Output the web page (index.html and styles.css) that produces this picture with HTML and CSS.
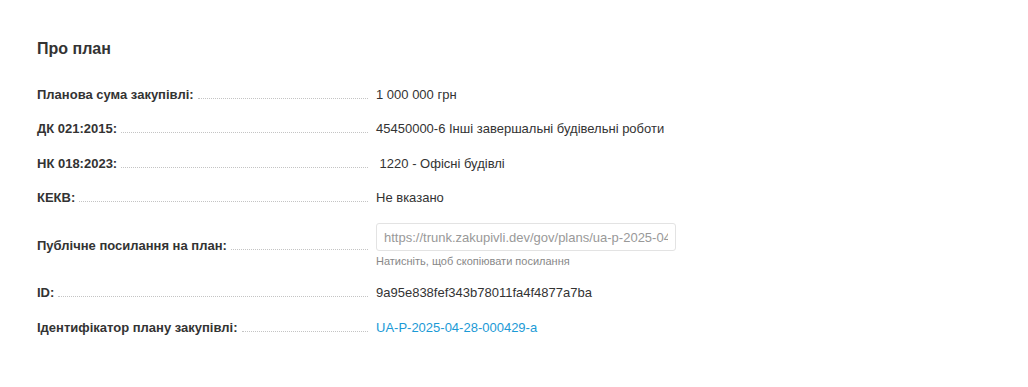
FILE: index.html
```html
<!DOCTYPE html>
<html>
<head>
<meta charset="utf-8">
<title>Про план</title>
<link rel="stylesheet" href="styles.css">
</head>
<body>
<div class="plan">
	<h2>Про план</h2>
	<div class="row">
		<div class="label"><span>Планова сума закупівлі:</span><i class="dots"></i></div>
		<div class="val">1 000 000 грн</div>
	</div>
	<div class="row">
		<div class="label"><span>ДК 021:2015:</span><i class="dots"></i></div>
		<div class="val">45450000-6 Інші завершальні будівельні роботи</div>
	</div>
	<div class="row">
		<div class="label"><span>НК 018:2023:</span><i class="dots"></i></div>
		<div class="val">&nbsp;1220 - Офісні будівлі</div>
	</div>
	<div class="row">
		<div class="label"><span>КЕКВ:</span><i class="dots"></i></div>
		<div class="val">Не вказано</div>
	</div>
	<div class="row">
		<div class="label"><span>Публічне посилання на план:</span><i class="dots"></i></div>
		<div class="val">
			<input class="link" type="text" readonly value="https://trunk.zakupivli.dev/gov/plans/ua-p-2025-04-28-000429-a">
			<div class="hint">Натисніть, щоб скопіювати посилання</div>
		</div>
	</div>
	<div class="row">
		<div class="label"><span>ID:</span><i class="dots"></i></div>
		<div class="val">9a95e838fef343b78011fa4f4877a7ba</div>
	</div>
	<div class="row">
		<div class="label"><span>Ідентифікатор плану закупівлі:</span><i class="dots"></i></div>
		<div class="val"><a href="#">UA-P-2025-04-28-000429-a</a></div>
	</div>
</div>
</body>
</html>
```

FILE: styles.css
```css
body {
	margin: 0;
	background: #fff;
	color: #333;
	font-family: "Liberation Sans", Arial, sans-serif;
	font-size: 13px;
}
.plan {
	padding: 38px 37px;
}
h2 {
	font-size: 16px;
	line-height: 20px;
	margin: 1px 0 19px 0;
}
/* rows */
.row {
	display: flex;
	align-items: center;
	padding: 8px 0;
	line-height: 18.33px;
}
.label {
	width: 331px;
	flex: none;
	display: flex;
	align-items: baseline;
	font-weight: bold;
	margin-right: 8px;
}
.dots {
	flex: 1;
	margin-left: 4px;
	border-bottom: 1px dotted #c4c4c4;
}
.val a {
	color: #1b9ad6;
	text-decoration: none;
}
/* link field */
.link {
	display: block;
	box-sizing: border-box;
	width: 300px;
	height: 28px;
	margin: 0;
	padding: 0 7px;
	border: 1px solid #e3e3e3;
	border-radius: 3px;
	background: #fff;
	color: #999;
	font-family: inherit;
	font-size: 13px;
	outline: none;
}
.hint {
	margin-top: 3px;
	font-size: 11px;
	line-height: 14px;
	color: #888;
}
```
